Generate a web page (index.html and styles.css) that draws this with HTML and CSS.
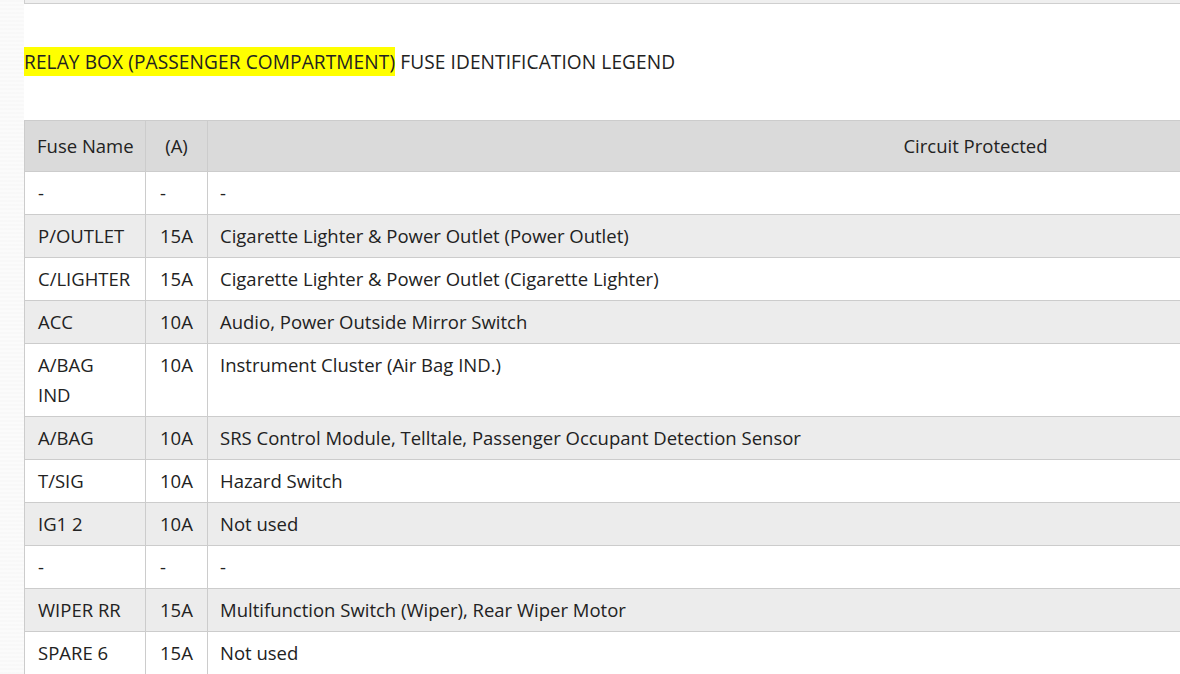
FILE: index.html
```html
<!DOCTYPE html>
<html>
<head>
<meta charset="utf-8">
<link rel="stylesheet" href="styles.css">
</head>
<body>
<div class="page">
  <div class="topbox"></div>
  <h3 class="legend"><span class="hl">RELAY BOX (PASSENGER COMPARTMENT)</span> FUSE IDENTIFICATION LEGEND</h3>
  <table class="fuses">
    <colgroup><col class="c1"><col class="c2"><col class="c3"></colgroup>
    <thead>
      <tr><th>Fuse Name</th><th>(A)</th><th>Circuit Protected</th></tr>
    </thead>
    <tbody>
      <tr><td>-</td><td>-</td><td>-</td></tr>
      <tr><td>P/OUTLET</td><td>15A</td><td>Cigarette Lighter &amp; Power Outlet (Power Outlet)</td></tr>
      <tr><td>C/LIGHTER</td><td>15A</td><td>Cigarette Lighter &amp; Power Outlet (Cigarette Lighter)</td></tr>
      <tr><td>ACC</td><td>10A</td><td>Audio, Power Outside Mirror Switch</td></tr>
      <tr><td>A/BAG<br>IND</td><td>10A</td><td>Instrument Cluster (Air Bag IND.)</td></tr>
      <tr><td>A/BAG</td><td>10A</td><td>SRS Control Module, Telltale, Passenger Occupant Detection Sensor</td></tr>
      <tr><td>T/SIG</td><td>10A</td><td>Hazard Switch</td></tr>
      <tr><td>IG1 2</td><td>10A</td><td>Not used</td></tr>
      <tr><td>-</td><td>-</td><td>-</td></tr>
      <tr><td>WIPER RR</td><td>15A</td><td>Multifunction Switch (Wiper), Rear Wiper Motor</td></tr>
      <tr><td>SPARE 6</td><td>15A</td><td>Not used</td></tr>
    </tbody>
  </table>
</div>
</body>
</html>
```

FILE: styles.css
```css
html, body {
  margin: 0;
  padding: 0;
}
body {
  width: 1180px;
  height: 674px;
  overflow: hidden;
  background-color: #fbfbfb;
  background-image: repeating-linear-gradient(0deg, rgba(0,0,0,0.012) 0 2px, transparent 2px 4px);
  font-family: "Open Sans", "Liberation Sans", sans-serif;
  color: #222;
}
.page {
  margin-left: 24px;
  background: #fff;
  min-height: 674px;
  width: 1800px;
}
.topbox {
  height: 3px;
  background: #efefef;
  border-left: 1px solid #cfcfcf;
  border-bottom: 1px solid #cfcfcf;
}
.legend {
  margin: 0;
  padding-top: 44px;
  font-size: 19.1px;
  font-weight: normal;
  line-height: 29px;
  height: 72px;
  letter-spacing: 0.1px;
}
.hl {
  background: #ffff00;
  padding: 2px 0 1px;
}
.fuses {
  border-collapse: collapse;
  table-layout: fixed;
  width: 1720px;
  font-size: 18.5px;
  line-height: 30px;
}
.fuses .c1 { width: 121px; }
.fuses .c2 { width: 62px; }
.fuses th, .fuses td {
  border: 1px solid #cccccc;
  vertical-align: top;
  white-space: nowrap;
}
.fuses th {
  background: #dadada;
  font-weight: normal;
  text-align: center;
  padding: 10px 12px;
}
.fuses td {
  text-align: left;
  padding: 6px 12px;
}
.fuses td:first-child {
  padding-left: 13px;
}
.fuses td:nth-child(2) {
  padding-left: 14px;
}
.fuses tbody tr:nth-child(even) td {
  background: #ececec;
}
```
